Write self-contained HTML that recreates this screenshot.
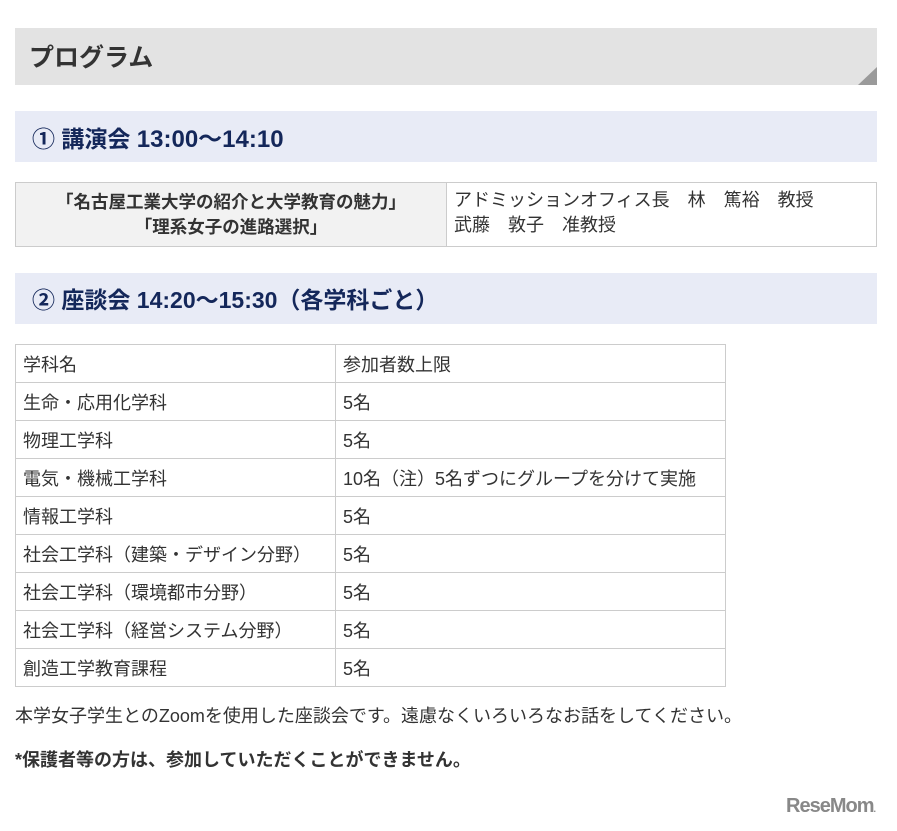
<!DOCTYPE html>
<html><head><meta charset="utf-8"><style>
body{margin:0;background:#fff;width:897px;height:831px;position:relative;font-family:"Liberation Sans","Noto Sans CJK JP",sans-serif;color:#333;overflow:hidden}
.h1{position:absolute;left:15px;top:28px;width:862px;height:57px;background:#e3e3e3;}
.h1 span{position:absolute;left:14px;top:10px;font-size:25px;font-weight:bold;color:#333}
.tri{position:absolute;right:0;bottom:0;width:0;height:0;border-left:19px solid transparent;border-bottom:18px solid #9a9a9a}
.h2{position:absolute;left:15px;width:862px;height:51px;background:#e8ebf6;}
.h2 span{position:absolute;left:17px;top:8px;font-size:23px;font-weight:bold;color:#14275a}
table{position:absolute;border-collapse:collapse;font-size:18px}
td{border:1px solid #ccc;padding:0 7px;}
.t1{left:15px;top:182px;width:862px}
.t1 td{height:30px}
.t1 td.l{background:#f2f2f2;font-weight:bold;text-align:center;width:416px;line-height:25px;font-size:17.5px}
.t1 td.r{line-height:25px;vertical-align:top;padding-top:5px}
.t2{left:15px;top:344px;width:711px}
.t2 td{height:37px}
.t2 td:first-child{width:305px}
p{position:absolute;left:15px;margin:0;font-size:18px}
</style></head><body>
<div class="h1"><span>プログラム</span><div class="tri"></div></div>
<div class="h2" style="top:111px"><span>① 講演会 <span style="position:static;font-size:24px">13:00～14:10</span></span></div>
<table class="t1"><tr><td class="l" style="height:63px">「名古屋工業大学の紹介と大学教育の魅力」<br>「理系女子の進路選択」</td><td class="r">アドミッションオフィス長　林　篤裕　教授<br>武藤　敦子　准教授</td></tr></table>
<div class="h2" style="top:273px"><span>② 座談会 14:20～15:30（各学科ごと）</span></div>
<table class="t2">
<tr><td>学科名</td><td>参加者数上限</td></tr>
<tr><td>生命・応用化学科</td><td>5名</td></tr>
<tr><td>物理工学科</td><td>5名</td></tr>
<tr><td>電気・機械工学科</td><td>10名（注）5名ずつにグループを分けて実施</td></tr>
<tr><td>情報工学科</td><td>5名</td></tr>
<tr><td>社会工学科（建築・デザイン分野）</td><td>5名</td></tr>
<tr><td>社会工学科（環境都市分野）</td><td>5名</td></tr>
<tr><td>社会工学科（経営システム分野）</td><td>5名</td></tr>
<tr><td>創造工学教育課程</td><td>5名</td></tr>
</table>
<p style="top:702px">本学女子学生とのZoomを使用した座談会です。遠慮なくいろいろなお話をしてください。</p>
<p style="top:746px;font-weight:bold">*保護者等の方は、参加していただくことができません。</p>
<div style="position:absolute;left:786px;top:795px;font-size:20px;font-weight:bold;color:#888;letter-spacing:-1px">ReseMom<span style="font-size:9px">.</span></div>
</body></html>
